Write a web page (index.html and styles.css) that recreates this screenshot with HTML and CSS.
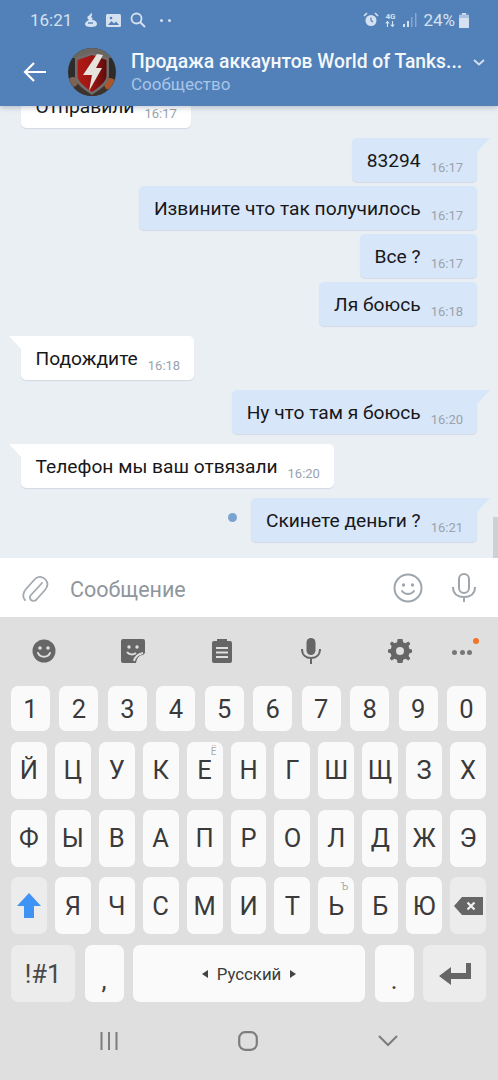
FILE: index.html
```html
<!DOCTYPE html>
<html lang="ru">
<head>
    <meta charset="UTF-8">
    <meta name="viewport" content="width=device-width, initial-scale=1.0">
    <title>Сообщения</title>
    <link rel="stylesheet" href="styles.css">
</head>
<body>
    <div class="top">
        <div class="status">
            <span class="clock">16:21</span>
            <svg class="st-icon" width="14" height="16" viewBox="0 0 14 16"><path d="M7 1c2 1 1 3 0 4 2 1 2 2 1 3 3 0 5 2 5 4 0 2-2 3-6 3s-6-1-6-3c0-2 2-3 4-4-2-1-2-3-1-4 1 0 2-1 3-3z" fill="#d5e0f0"/><path d="M4 11h5" stroke="#5181b8" stroke-width="1.4"/></svg>
            <svg class="st-icon st-img" width="15" height="13" viewBox="0 0 15 13"><rect width="15" height="13" rx="1.5" fill="#d5e0f0"/><path d="M2 11l3.500-4 2.500 2.500 2-2 3 3.500z" fill="#5181b8"/><circle cx="5" cy="4" r="1.300" fill="#5181b8"/></svg>
            <svg class="st-icon st-search" width="16" height="16" viewBox="0 0 16 16"><circle cx="6.500" cy="6.500" r="5" fill="none" stroke="#d5e0f0" stroke-width="1.800"/><path d="M10 10l5 5" stroke="#d5e0f0" stroke-width="2"/></svg>
            <span class="dots"><i></i><i></i></span>
            <span class="status-right">
                <svg width="16" height="16" viewBox="0 0 16 16"><circle cx="8" cy="8.500" r="5.500" fill="#d5e0f0"/><path d="M8 5.500v3l2 1.500" stroke="#5181b8" stroke-width="1.200" fill="none"/><path d="M1 4l3-3M15 4l-3-3" stroke="#d5e0f0" stroke-width="1.600"/></svg>
                <span class="net">4G<svg width="10" height="6" viewBox="0 0 10 6"><path d="M2.500 6V1M.8 2.500L2.500.5l1.700 2M7.500 0v5M5.800 3.500l1.700 2 1.700-2" stroke="#d5e0f0" stroke-width="1.100" fill="none"/></svg></span>
                <svg class="signal" width="14" height="14" viewBox="0 0 14 14"><rect x="0" y="11" width="2" height="3" fill="#d5e0f0"/><rect x="4" y="8" width="2" height="6" fill="#d5e0f0"/><rect x="8" y="4" width="1.500" height="10" fill="#86a8d2"/><rect x="12" y="0" width="1.500" height="14" fill="#86a8d2"/></svg>
                <span class="percent">24%</span>
                <svg width="10" height="15" viewBox="0 0 10 15"><rect x="3" width="4" height="2" fill="#d5e0f0"/><rect y="1.500" width="10" height="13.500" rx="1" fill="#a9c3e2"/><rect y="5" width="10" height="10" rx="1" fill="#d5e0f0"/></svg>
            </span>
        </div>
        <div class="nav">
            <svg class="back" width="24" height="20" viewBox="0 0 24 20"><path d="M23 10H2M11 1l-9 9 9 9" fill="none" stroke="#fff" stroke-width="2.200"/></svg>
            <svg class="avatar" width="48" height="48" viewBox="0 0 48 48">
                <defs>
                    <clipPath id="round"><circle cx="24" cy="24" r="24"/></clipPath>
                    <linearGradient id="shield" x1="0" y1="0" x2="1" y2="0"><stop offset="0" stop-color="#b01a16"/><stop offset="0.5" stop-color="#9c1512"/><stop offset="1" stop-color="#5e0c0b"/></linearGradient>
                </defs>
                <g clip-path="url(#round)">
                    <rect width="48" height="48" fill="#2e2b2a"/>
                    <rect y="0" width="48" height="10" fill="#6b6560"/>
                    <rect y="34" width="48" height="14" fill="#3e332c"/>
                    <circle cx="42" cy="36" r="6" fill="#a9562a"/>
                    <circle cx="5" cy="34" r="5" fill="#7c6450"/>
                </g>
                <path d="M24 4l17 6v18c0 8-10 14-17 19C17 42 7 36 7 28V10z" fill="#6f6c6b"/>
                <path d="M24 7l14.500 5v16c0 6-9 12-14.500 16C18.500 40 9.500 34 9.500 28V12z" fill="url(#shield)"/>
                <path d="M29 6l6 1-7 13h6L21 43l3-16h-9z" fill="#e6e2de"/>
            </svg>
            <div class="title-block">
                <div class="title">Продажа аккаунтов World of Tanks...</div>
                <div class="subtitle">Сообщество</div>
            </div>
            <svg class="chev" width="12" height="7" viewBox="0 0 12 7"><path d="M1 1l5 4.500L11 1" fill="none" stroke="#d5e0f0" stroke-width="1.800"/></svg>
        </div>
    </div>

    <div class="messages">
        <div class="msg in"><span class="text">Отправили</span><span class="time">16:17</span></div>
        <div class="msg out tail group"><span class="text">83294</span><span class="time">16:17</span></div>
        <div class="msg out"><span class="text">Извините что так получилось</span><span class="time">16:17</span></div>
        <div class="msg out"><span class="text">Все ?</span><span class="time">16:17</span></div>
        <div class="msg out"><span class="text">Ля боюсь</span><span class="time">16:18</span></div>
        <div class="msg in tail group"><span class="text">Подождите</span><span class="time">16:18</span></div>
        <div class="msg out tail group"><span class="text">Ну что там я боюсь</span><span class="time">16:20</span></div>
        <div class="msg in tail group"><span class="text">Телефон мы ваш отвязали</span><span class="time">16:20</span></div>
        <div class="msg out tail group unread"><span class="text">Скинете деньги ?</span><span class="time">16:21</span></div>
        <div class="scrollbar"></div>
    </div>

    <div class="compose">
        <svg class="clip" width="28" height="30" viewBox="0 0 28 30"><path d="M21 9L10 21c-2 2.200-1 4 0 5s3.500 1.500 5.500-.5L24 16c3-3.500 3-7.500.5-10.500S17 1.500 14 5L5 15c-4 4.500-3 9-1 11" transform="translate(0 1)" fill="none" stroke="#a3a9b0" stroke-width="1.800" stroke-linecap="round"/></svg>
        <span class="placeholder">Сообщение</span>
        <svg class="smile" width="30" height="30" viewBox="0 0 30 30"><circle cx="15" cy="15" r="13.500" fill="none" stroke="#9fa6ad" stroke-width="2"/><circle cx="10.500" cy="12" r="1.700" fill="#9fa6ad"/><circle cx="19.500" cy="12" r="1.700" fill="#9fa6ad"/><path d="M9 18c3 4 9 4 12 0" fill="none" stroke="#9fa6ad" stroke-width="2" stroke-linecap="round"/></svg>
        <svg class="voice" width="24" height="30" viewBox="0 0 24 30"><rect x="7" y="1" width="10" height="19" rx="5" fill="none" stroke="#9fa6ad" stroke-width="2"/><path d="M1 14c0 7 5 10 11 10s11-3 11-10M12 24v5" fill="none" stroke="#9fa6ad" stroke-width="2"/></svg>
    </div>

    <div class="keyboard">
        <div class="tools">
            <span class="tool"><svg width="24" height="24" viewBox="0 0 24 24"><circle cx="12" cy="12" r="11.500" fill="#666"/><circle cx="8" cy="9" r="1.800" fill="#dfdfdf"/><circle cx="16" cy="9" r="1.800" fill="#dfdfdf"/><path d="M6 14c2 5 10 5 12 0" fill="none" stroke="#dfdfdf" stroke-width="2" stroke-linecap="round"/></svg></span>
            <span class="tool"><svg width="24" height="24" viewBox="0 0 24 24"><path d="M2 0h20a2 2 0 0 1 2 2v12l-2 2c-4 0-6 3-7 8H2a2 2 0 0 1-2-2V2a2 2 0 0 1 2-2z" fill="#666"/><circle cx="8" cy="8" r="1.700" fill="#dfdfdf"/><circle cx="16" cy="8" r="1.700" fill="#dfdfdf"/><path d="M6 13c2 3 6 3 9 1M13 22c1-4 4-7 9-8" fill="none" stroke="#dfdfdf" stroke-width="2"/></svg></span>
            <span class="tool"><svg width="20" height="24" viewBox="0 0 20 24"><path d="M5 0h10v2h3a2 2 0 0 1 2 2v18a2 2 0 0 1-2 2H2a2 2 0 0 1-2-2V4a2 2 0 0 1 2-2h3z" fill="#666"/><path d="M4 9h12M4 13.500h12M4 18h12" stroke="#dfdfdf" stroke-width="2"/></svg></span>
            <span class="tool"><svg width="20" height="26" viewBox="0 0 20 26"><rect x="5.500" y="0" width="9" height="17" rx="4.500" fill="#666"/><path d="M1 11c0 6 4 9 9 9s9-3 9-9M10 20v6" fill="none" stroke="#666" stroke-width="2"/></svg></span>
            <span class="tool"><svg width="24" height="24" viewBox="0 0 24 24"><path d="M12 0l2.500 0 .8 3.300 2.500 1 2.900-1.800 2 2-1.800 2.900 1 2.500 3.300.8v2.700l-3.300.8-1 2.500 1.800 2.900-2 2-2.900-1.800-2.500 1-.8 3.300H9.500l-.8-3.300-2.500-1-2.900 1.800-2-2 1.800-2.900-1-2.500L-1 13.400v-2.700l3.300-.8 1-2.500-1.800-2.900 2-2 2.900 1.800 2.500-1L9.500 0z" transform="translate(.5 0) scale(.96 1)" fill="#666"/><circle cx="12" cy="12" r="4" fill="#dfdfdf"/></svg></span>
            <span class="tool more"><span class="more-dots"><i></i><i></i><i></i></span><span class="orange"></span></span>
        </div>

        <div class="rows">
            <div class="row nums">
                <span class="key">1</span><span class="key">2</span><span class="key">3</span><span class="key">4</span><span class="key">5</span><span class="key">6</span><span class="key">7</span><span class="key">8</span><span class="key">9</span><span class="key">0</span>
            </div>
            <div class="row letters">
                <span class="key">Й</span><span class="key">Ц</span><span class="key">У</span><span class="key">К</span><span class="key">Е<small class="hint">Ё</small></span><span class="key">Н</span><span class="key">Г</span><span class="key">Ш</span><span class="key">Щ</span><span class="key">З</span><span class="key">Х</span>
            </div>
            <div class="row letters">
                <span class="key">Ф</span><span class="key">Ы</span><span class="key">В</span><span class="key">А</span><span class="key">П</span><span class="key">Р</span><span class="key">О</span><span class="key">Л</span><span class="key">Д</span><span class="key">Ж</span><span class="key">Э</span>
            </div>
            <div class="row letters">
                <span class="key fn"><svg width="24" height="25" viewBox="0 0 24 25"><path d="M12 0l12 13h-7v12H7V13H0z" fill="#3f93f5"/></svg></span>
                <span class="key">Я</span><span class="key">Ч</span><span class="key">С</span><span class="key">М</span><span class="key">И</span><span class="key">Т</span><span class="key">Ь<small class="hint">Ъ</small></span><span class="key">Б</span><span class="key">Ю</span>
                <span class="key fn"><svg width="29" height="18" viewBox="0 0 29 18"><path d="M8 0h21v18H8L0 9z" fill="#666"/><path d="M13.500 5.500l7 7M20.500 5.500l-7 7" stroke="#f2f2f2" stroke-width="2.200"/></svg></span>
            </div>
            <div class="row bottom">
                <span class="key fn sym">!#1</span>
                <span class="key low">,</span>
                <span class="key space"><i class="arr left"></i>Русский<i class="arr right"></i></span>
                <span class="key low">.</span>
                <span class="key fn"><svg width="32" height="22" viewBox="0 0 32 22"><path d="M32 0v16H12v6L0 13 12 4v6h15V0z" fill="#666"/></svg></span>
            </div>
        </div>

        <div class="navbar">
            <span class="nav-slot"><svg width="18" height="18" viewBox="0 0 18 18"><path d="M1.500 0v18M9 0v18M16.500 0v18" stroke="#7d7d7d" stroke-width="2"/></svg></span>
            <span class="nav-slot"><svg width="20" height="20" viewBox="0 0 20 20"><rect x="1.200" y="1.200" width="17.600" height="17.600" rx="6" fill="none" stroke="#7d7d7d" stroke-width="2.200"/></svg></span>
            <span class="nav-slot"><svg width="20" height="12" viewBox="0 0 20 12"><path d="M1 1l9 9 9-9" fill="none" stroke="#7d7d7d" stroke-width="2"/></svg></span>
        </div>
    </div>
</body>
</html>
```

FILE: styles.css
```css
* {
    margin: 0;
    padding: 0;
    box-sizing: border-box;
}

body {
    width: 498px;
    height: 1080px;
    overflow: hidden;
    display: flex;
    flex-direction: column;
    font-family: Roboto, "Noto Sans", sans-serif;
    background: #eaeff4;
}

svg {
    display: block;
    flex: none;
}

/* header */

.top {
    height: 106px;
    flex: none;
    background: #5181b8;
    position: relative;
    z-index: 2;
    box-shadow: 0 2px 5px rgba(40, 60, 90, 0.25);
}

.status {
    height: 40px;
    display: flex;
    align-items: center;
    padding: 0 29px 0 30px;
    color: #d5e0f0;
}

.clock {
    font-size: 17px;
    width: 54px;
}

.st-img {
    margin-left: 8px;
}

.st-search {
    margin-left: 9px;
}

.dots {
    display: flex;
    gap: 5px;
    margin-left: 14px;
}

.dots i {
    width: 3px;
    height: 3px;
    border-radius: 50%;
    background: #d5e0f0;
}

.status-right {
    margin-left: auto;
    display: flex;
    align-items: center;
}

.net {
    font-size: 8px;
    font-weight: 700;
    line-height: 8px;
    width: 10px;
    margin: 0 8px 0 6px;
}

.percent {
    font-size: 17px;
    margin: 0 4px 0 6px;
}

.nav {
    height: 66px;
    display: flex;
    align-items: center;
    padding: 0 0 2px 23px;
}

.avatar {
    margin-left: 21px;
}

.title-block {
    margin-left: 15px;
    width: 335px;
}

.title {
    font-size: 19.300px;
    font-weight: 500;
    color: #f4f7fb;
    white-space: nowrap;
    line-height: 24px;
}

.subtitle {
    font-size: 17px;
    color: #a9c5e8;
    line-height: 21px;
}

.chev {
    margin: -20px 0 0 7px;
}

/* chat */

.messages {
    height: 452px;
    flex: none;
    position: relative;
    overflow: hidden;
    display: flex;
    flex-direction: column;
    justify-content: flex-end;
    padding: 0 21px 16px;
    gap: 4px;
}

.msg {
    height: 44px;
    flex: none;
    display: flex;
    align-items: center;
    position: relative;
    padding: 0 14px 0 15px;
    border-radius: 5px;
    box-shadow: 0 1px 1px rgba(120, 140, 170, 0.22);
}

.msg.group {
    margin-top: 6px;
}

.in {
    align-self: flex-start;
    background: #fff;
    padding-left: 14.500px;
}

.out {
    align-self: flex-end;
    background: #d7e6f8;
}

.text {
    font-size: 19.200px;
    color: #17171a;
}

.time {
    font-size: 13px;
    color: #9aa3ad;
    margin: 14px 0 0 10px;
}

.tail::after {
    content: "";
    position: absolute;
    top: 0;
    width: 14px;
    height: 15px;
}

.in.tail {
    border-top-left-radius: 0;
}

.in.tail::after {
    left: -12px;
    background: #fff;
    clip-path: polygon(0 0, 100% 0, 100% 100%);
}

.out.tail {
    border-top-right-radius: 0;
}

.out.tail::after {
    right: -13px;
    background: #d7e6f8;
    clip-path: polygon(0 0, 100% 0, 0 100%);
}

.unread::before {
    content: "";
    position: absolute;
    left: -23px;
    top: 15px;
    width: 9px;
    height: 9px;
    border-radius: 50%;
    background: #7aa3d0;
}

.scrollbar {
    position: absolute;
    right: 0;
    bottom: 0;
    width: 5px;
    height: 41px;
    background: #cdd1d5;
}

/* input bar */

.compose {
    height: 59px;
    flex: none;
    background: #fff;
    display: flex;
    align-items: center;
    padding: 0 22px 0 21px;
}

.placeholder {
    font-size: 21.500px;
    color: #8f969d;
    margin: 3px 0 0 21px;
}

.smile {
    margin-left: auto;
}

.voice {
    margin-left: 29px;
}

/* keyboard */

.keyboard {
    flex: 1;
    background: #dfdfdf;
}

.tools {
    height: 69px;
    display: flex;
    align-items: center;
    padding-bottom: 1px;
}

.tool {
    width: 88.800px;
    display: flex;
    justify-content: center;
}

.more {
    width: 37px;
    position: relative;
}

.more-dots {
    display: flex;
    gap: 2.500px;
    margin-top: 2px;
}

.more-dots i {
    width: 5px;
    height: 5px;
    border-radius: 50%;
    background: #777;
}

.orange {
    position: absolute;
    right: 2px;
    top: -10px;
    width: 6px;
    height: 6px;
    border-radius: 50%;
    background: #f0742a;
}

.rows {
    display: flex;
    flex-direction: column;
    gap: 10.750px;
    padding: 0 12px 0 11px;
}

.row {
    display: grid;
    height: 57px;
}

.nums {
    height: 45px;
    grid-template-columns: repeat(10, 1fr);
    gap: 9.500px;
}

.letters {
    grid-template-columns: repeat(11, 1fr);
    gap: 8px;
}

.bottom {
    grid-template-columns: 64px 39px 232px 39px 63px;
    justify-content: space-between;
}

.key {
    position: relative;
    display: flex;
    align-items: center;
    justify-content: center;
    background: #fafafa;
    border-radius: 7px;
    font-size: 25.500px;
    color: #3a3a3a;
}

.fn {
    background: #ececec;
}

.sym {
    color: #484848;
}

.low {
    padding-top: 12px;
}

.hint {
    position: absolute;
    top: 4px;
    right: 6px;
    font-size: 10px;
    color: #aaa;
}

.space {
    font-size: 16.800px;
    gap: 9px;
}

.arr {
    width: 0;
    height: 0;
    border: 4px solid transparent;
}

.arr.left {
    border-left: none;
    border-right: 6px solid #444;
}

.arr.right {
    border-right: none;
    border-left: 6px solid #444;
}

.navbar {
    height: 78px;
    display: flex;
    align-items: center;
    padding: 0 40px 0 39px;
}

.nav-slot {
    width: 139.500px;
    display: flex;
    justify-content: center;
}
```
